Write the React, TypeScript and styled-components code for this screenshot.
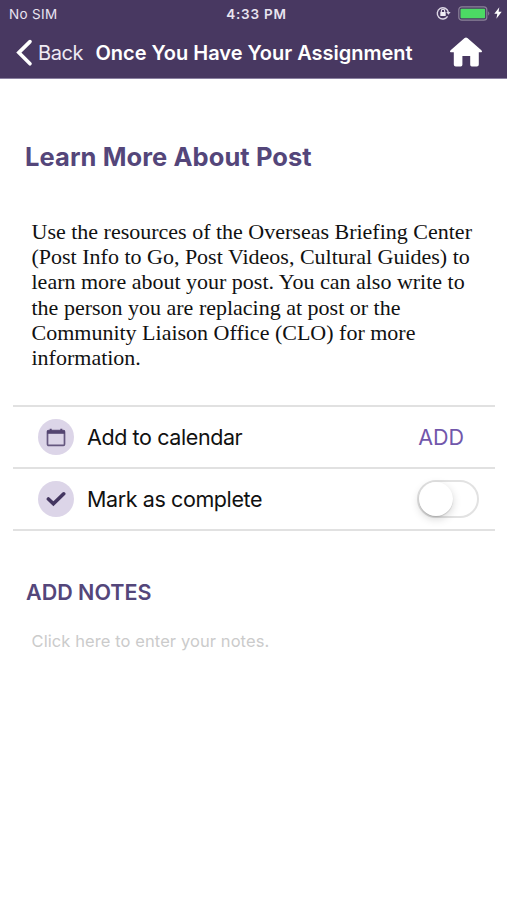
import React, { useState } from "react";
import styled, { createGlobalStyle } from "styled-components";

const Global = createGlobalStyle`
  *, *::before, *::after { box-sizing: border-box; }
  body { margin: 0; background: #fff; }
  h1, h2, p { margin: 0; }
  button { border: 0; padding: 0; background: none; font: inherit; cursor: pointer; }
`;

const Screen = styled.div`
  width: 507px;
  height: 900px;
  overflow: hidden;
  background: #fff;
  color: #111;
  font-family: Inter, "Liberation Sans", sans-serif;
`;

const Header = styled.header`
  height: 79px;
  background: #483861;
  border-bottom: 1px solid #8a80a0;
  color: #fff;
`;

const StatusBar = styled.div`
  height: 27px;
  display: grid;
  grid-template-columns: 1fr auto 1fr;
  align-items: center;
  padding: 1px 5px 0 9px;
  font-size: 13.5px;
  line-height: 18px;
  color: #e9e4f0;
`;

const Carrier = styled.span`
  letter-spacing: 0.35px;
`;

const Clock = styled.span`
  font-weight: 600;
  letter-spacing: 0.8px;
  margin-left: 2px;
`;

const StatusIcons = styled.div`
  display: flex;
  justify-content: flex-end;
  align-items: center;
  margin-top: -2px;
`;

const NavBar = styled.nav`
  height: 51px;
  display: flex;
  align-items: center;
  padding: 0 24px 0 16px;
`;

const BackButton = styled.button`
  display: flex;
  align-items: center;
  gap: 5px;
  width: 79.5px;
  color: #eeeaf4;
  font-size: 20px;
  line-height: 26px;
  letter-spacing: -0.45px;
`;

const NavTitle = styled.h1`
  flex: 1;
  font-size: 20px;
  font-weight: 600;
  line-height: 26px;
  letter-spacing: -0.01px;
  white-space: nowrap;
`;

const HomeButton = styled.button`
  display: flex;
  margin-top: -2px;
`;

const Main = styled.main`
  padding: 61px 12px 0 13px;
`;

const Heading = styled.h2`
  padding-left: 12px;
  color: #54467a;
  font-size: 25.5px;
  font-weight: 650;
  line-height: 34px;
  letter-spacing: 0.08px;
  white-space: nowrap;
`;

const Description = styled.p`
  margin: 45px 0 35px;
  padding-left: 18.5px;
  color: #111;
  font-family: "Liberation Serif", "Times New Roman", serif;
  font-size: 22px;
  line-height: 25.2px;
  white-space: nowrap;
`;

const ActionList = styled.section`
  border-top: 2px solid #e1e1e1;
`;

const ActionRow = styled.div`
  height: 62px;
  display: flex;
  align-items: center;
  padding: 0 16px 0 25px;
  border-bottom: 2px solid #e1e1e1;
`;

const IconDisc = styled.span`
  width: 36px;
  height: 36px;
  margin-right: 13px;
  border-radius: 50%;
  background: #dcd5e8;
  display: flex;
  align-items: center;
  justify-content: center;
`;

const ActionLabel = styled.span`
  flex: 1;
  font-size: 21.5px;
  line-height: 28px;
  letter-spacing: -0.4px;
`;

const AddButton = styled.button`
  margin-right: 15px;
  color: #7157ab;
  font-size: 21.5px;
  line-height: 28px;
`;

const Track = styled.button<{ $on: boolean }>`
  width: 62px;
  height: 38px;
  display: flex;
  align-items: center;
  justify-content: ${(p) => (p.$on ? "flex-end" : "flex-start")};
  border: 2px solid ${(p) => (p.$on ? "#7157ab" : "#e2e2e2")};
  border-radius: 19px;
  background: ${(p) => (p.$on ? "#7157ab" : "#fff")};
`;

const Knob = styled.span`
  width: 34px;
  height: 34px;
  border-radius: 50%;
  background: #fff;
  box-shadow: 0 3px 8px rgba(0, 0, 0, 0.17), 0 1px 1px rgba(0, 0, 0, 0.14);
`;

const NotesTitle = styled.h2`
  margin-top: 47px;
  padding-left: 13px;
  color: #54467a;
  font-size: 21.5px;
  font-weight: 620;
  line-height: 28px;
`;

const NotesInput = styled.textarea`
  display: block;
  width: 440px;
  height: 60px;
  margin: 23px 0 0 18.5px;
  padding: 0;
  border: 0;
  outline: 0;
  resize: none;
  font-family: inherit;
  font-size: 16.5px;
  line-height: 24px;
  letter-spacing: 0.09px;
  &::placeholder { color: #cbcbcb; opacity: 1; }
`;

const Gap = styled.span<{ $w: number }>`
  width: ${(p) => p.$w}px;
`;

const BackIcon = () => (
  <svg width="17" height="28" viewBox="0 0 17 28" fill="none">
    <path d="M14 2.6 2.8 13.6 14 24.8" stroke="#fff" strokeWidth="3.6" strokeLinecap="round" />
  </svg>
);

const HomeIcon = () => (
  <svg width="34" height="30" viewBox="0 0 34 30" fill="#fff">
    <path d="M15.6 1 Q17 0 18.4 1 L32.4 13.2 Q33.8 14.8 32.4 15.2 H29.8 V27.5 Q29.8 29.5 27.8 29.5 H22.8 Q21.2 29.5 21.2 27.8 V19 H13.4 V27.8 Q13.4 29.5 11.8 29.5 H6.8 Q4.8 29.5 4.8 27.5 V15.2 H1.6 Q.2 14.8 1.6 13.2Z" />
  </svg>
);

const LockIcon = () => (
  <svg width="15" height="14" viewBox="0 0 15 14" fill="none">
    <path d="M11.6 10.4A5.6 5.6 0 1 1 12.3 6" stroke="#ddd7e5" strokeWidth="1.4" />
    <path d="M10.2 6h4.4l-2.2 2.8z" fill="#ddd7e5" />
    <rect x="4.3" y="6" width="5.4" height="4.1" rx=".5" fill="#f0edf4" />
    <path d="M5.3 6V5a1.7 1.7 0 0 1 3.4 0v1" stroke="#f0edf4" strokeWidth="1.1" />
  </svg>
);

const BatteryIcon = () => (
  <svg width="33" height="15" viewBox="0 0 33 15" fill="none">
    <rect x=".8" y=".8" width="28" height="13.4" rx="3" stroke="#8b8299" strokeWidth="1.2" />
    <rect x="2.5" y="2.7" width="24.6" height="9.6" rx="1" fill="#4cda64" />
    <path d="M30.2 5.2q2.2 2.2 0 4.5z" fill="#8b8299" />
  </svg>
);

const BoltIcon = () => (
  <svg width="8" height="12" viewBox="0 0 8 12" fill="#fff">
    <path d="M5.3.3.3 6.7h3L2.4 11.7 7.7 4.8H4.6z" />
  </svg>
);

const CalendarIcon = () => (
  <svg width="20" height="19" viewBox="0 0 20 19" fill="none">
    <rect x="1.5" y="2.6" width="17" height="14.8" rx="1.2" stroke="#65577f" strokeWidth="1.7" />
    <path d="M1 2.6h18v3.2H1z" fill="#544571" />
    <path d="M4.7.8v3M15.3.8v3" stroke="#544571" strokeWidth="2" />
  </svg>
);

const CheckIcon = () => (
  <svg width="20" height="16" viewBox="0 0 20 16" fill="none">
    <path d="m2.4 8 5 4.7L17.7 2.8" stroke="#443661" strokeWidth="3.6" strokeLinecap="round" />
  </svg>
);

export default function App() {
  const [complete, setComplete] = useState(false);
  return (
    <Screen>
      <Global />
      <Header>
        <StatusBar>
          <Carrier>No SIM</Carrier>
          <Clock>4:33 PM</Clock>
          <StatusIcons>
            <LockIcon />
            <Gap $w={7} />
            <BatteryIcon />
            <Gap $w={3} />
            <BoltIcon />
          </StatusIcons>
        </StatusBar>
        <NavBar>
          <BackButton>
            <BackIcon />
            Back
          </BackButton>
          <NavTitle>Once You Have Your Assignment</NavTitle>
          <HomeButton aria-label="Home">
            <HomeIcon />
          </HomeButton>
        </NavBar>
      </Header>
      <Main>
        <Heading>Learn More About Post</Heading>
        <Description>
          Use the resources of the Overseas Briefing Center<br />
          (Post Info to Go, Post Videos, Cultural Guides) to<br />
          learn more about your post. You can also write to<br />
          the person you are replacing at post or the<br />
          Community Liaison Office (CLO) for more<br />
          information.
        </Description>
        <ActionList>
          <ActionRow>
            <IconDisc><CalendarIcon /></IconDisc>
            <ActionLabel>Add to calendar</ActionLabel>
            <AddButton>ADD</AddButton>
          </ActionRow>
          <ActionRow>
            <IconDisc><CheckIcon /></IconDisc>
            <ActionLabel>Mark as complete</ActionLabel>
            <Track
              $on={complete}
              role="switch"
              aria-checked={complete}
              aria-label="Mark as complete"
              onClick={() => setComplete(!complete)}
            >
              <Knob />
            </Track>
          </ActionRow>
        </ActionList>
        <NotesTitle>ADD NOTES</NotesTitle>
        <NotesInput placeholder="Click here to enter your notes." />
      </Main>
    </Screen>
  );
}
